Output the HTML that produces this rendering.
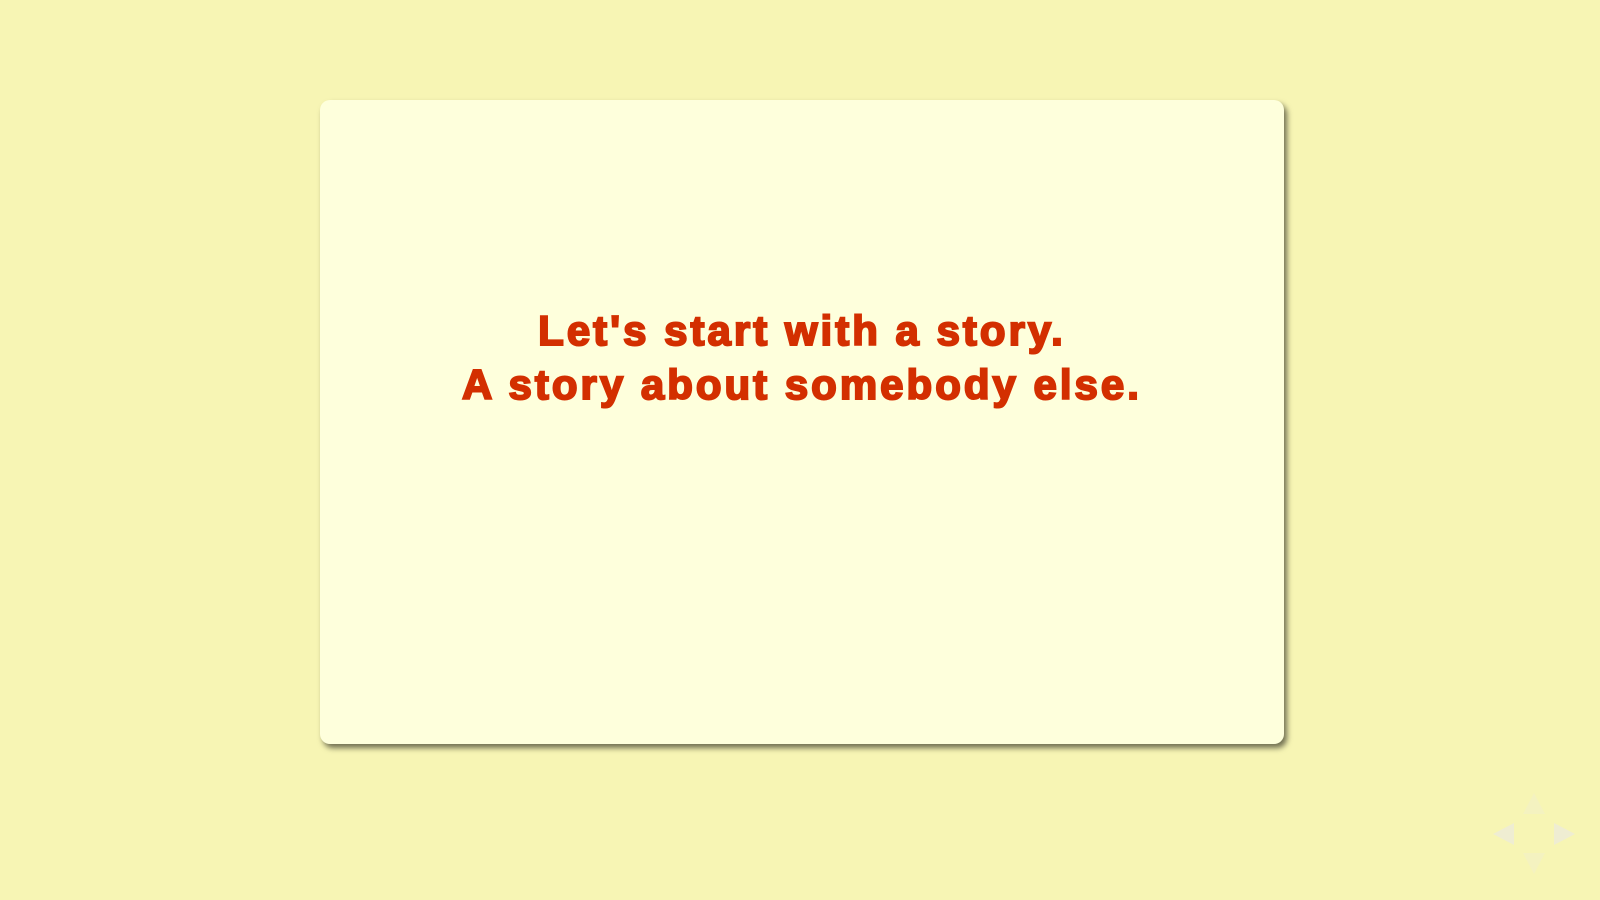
<!DOCTYPE html>
<html><head><style>
html,body{margin:0;width:1600px;height:900px;background:#f7f5b4;overflow:hidden}
.card{position:absolute;left:320px;top:100px;width:964px;height:644px;background:#feffdc;border-radius:10px;box-shadow:3px 4px 6px rgba(0,0,0,0.55)}
.t{position:absolute;left:0;width:964px;top:204px;text-align:center;font-family:"Liberation Sans",sans-serif;font-weight:bold;font-size:42px;line-height:54px;color:#d32f00;letter-spacing:3px;-webkit-text-stroke:2px #d32f00}
.a{position:absolute;width:0;height:0}
</style></head><body>
<div class="card"><div class="t">Let's start with a story.<br>A story about somebody else.</div></div>
<div class="a" style="left:1493px;top:823px;border-top:11px solid transparent;border-bottom:11px solid transparent;border-right:21px solid #efedd2"></div>
<div class="a" style="left:1554px;top:823px;border-top:11px solid transparent;border-bottom:11px solid transparent;border-left:21px solid #efedd2"></div>
<div class="a" style="left:1523px;top:793px;border-left:11px solid transparent;border-right:11px solid transparent;border-bottom:21px solid #f4f2c0"></div>
<div class="a" style="left:1523px;top:853px;border-left:11px solid transparent;border-right:11px solid transparent;border-top:21px solid #f4f2c0"></div>
</body></html>
